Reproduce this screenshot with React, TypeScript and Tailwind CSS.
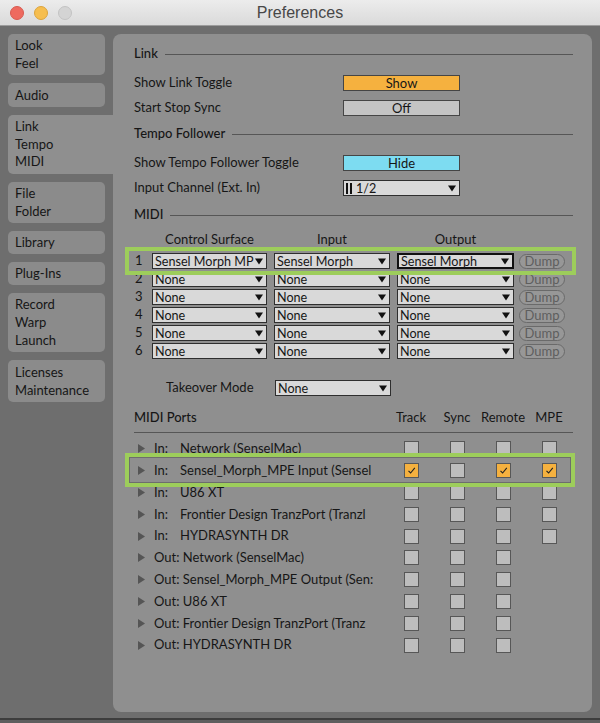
import React from "react";

function Arrow() {
  return (
    <svg width="8" height="7" viewBox="0 0 8 7" className="shrink-0">
      <path d="M0 0.5 H8 L4 6.5 Z" fill="#111" />
    </svg>
  );
}

function Dropdown({ cls, label, bars }: { cls: string; label: string; bars?: boolean }) {
  return (
    <div className={`flex h-[16px] items-center justify-between bg-[#d9d9d9] pl-[2px] pr-[3px] ${cls}`}>
      <div className="flex min-w-0 flex-1 items-center whitespace-nowrap text-[12.6px] leading-[15px]">
        {bars && (
          <span className="mr-[4px] flex shrink-0 gap-[2px]">
            <span className="h-[11px] w-[2px] bg-[#111]" />
            <span className="h-[11px] w-[2px] bg-[#111]" />
          </span>
        )}
        <span>{label}</span>
      </div>
      <Arrow />
    </div>
  );
}

function Header({ label, cls }: { label: string; cls: string }) {
  return (
    <div className={`flex items-center ${cls}`}>
      <span className="font-medium">{label}</span>
      <div className="ml-[7px] h-px flex-1 bg-[#565656]" />
    </div>
  );
}

function Check({ on }: { on?: boolean }) {
  return (
    <div
      className={`flex h-[15px] w-[15px] items-center justify-center border border-[#575757] ${
        on ? "bg-[#f5b13f]" : "bg-[#bdbdbd]"
      }`}
    >
      {on && (
        <svg width="11" height="11" viewBox="0 0 11 11">
          <path d="M2.5 5.8 L4.6 8 L8.8 2.8" fill="none" stroke="#222" strokeWidth="1.1" />
        </svg>
      )}
    </div>
  );
}

function Tri() {
  return (
    <div className="flex w-[20px] items-center pl-[4px]">
      <svg width="7" height="9" viewBox="0 0 7 9">
        <path d="M0 0 L7 4.5 L0 9 Z" fill="#555" />
      </svg>
    </div>
  );
}

const ports: { dir: "In" | "Out"; name: string; checks: boolean[] }[] = [
  { dir: "In", name: "Network (SenselMac)", checks: [false, false, false, false] },
  { dir: "In", name: "Sensel_Morph_MPE Input (Sensel", checks: [true, false, true, true] },
  { dir: "In", name: "U86 XT", checks: [false, false, false, false] },
  { dir: "In", name: "Frontier Design TranzPort (Tranzl", checks: [false, false, false, false] },
  { dir: "In", name: "HYDRASYNTH DR", checks: [false, false, false, false] },
  { dir: "Out", name: "Network (SenselMac)", checks: [false, false, false] },
  { dir: "Out", name: "Sensel_Morph_MPE Output (Sen:", checks: [false, false, false] },
  { dir: "Out", name: "U86 XT", checks: [false, false, false] },
  { dir: "Out", name: "Frontier Design TranzPort (Tranz", checks: [false, false, false] },
  { dir: "Out", name: "HYDRASYNTH DR", checks: [false, false, false] },
];

function Tab({ lines, cls }: { lines: string[]; cls: string }) {
  return (
    <div className={`w-[97px] rounded-[5px] bg-[#8b8b8b] pl-[7px] leading-[18px] ${cls}`}>
      {lines.map((l) => (
        <div key={l}>{l}</div>
      ))}
    </div>
  );
}

export default function App() {
  return (
    <div className="flex h-[723px] w-[600px] flex-col overflow-hidden bg-[#6e6e6e] font-[family-name:Lato,'Noto_Sans',sans-serif] text-[13px] text-[#161616]">
      {/* title bar */}
      <div className="grid h-[26px] shrink-0 grid-cols-[1fr_auto_1fr] items-center border-b border-[#9c9c9c] bg-gradient-to-b from-[#ececec] to-[#dadada]">
        <div className="flex items-center gap-[10px] pl-[10px]">
          <div className="h-[14px] w-[14px] rounded-full border border-[#d85a50] bg-[#ee6a5f]" />
          <div className="h-[14px] w-[14px] rounded-full border border-[#dca43c] bg-[#f6be4f]" />
          <div className="h-[14px] w-[14px] rounded-full border border-[#c3c3c3] bg-[#d4d4d4]" />
        </div>
        <div className="font-[family-name:'Liberation_Sans',sans-serif] text-[16px] text-[#474747]">Preferences</div>
        <div />
      </div>

      {/* body */}
      <div className="flex h-[692px] shrink-0 px-[8px] pt-[8px]">
        {/* sidebar */}
        <div className="flex w-[105px] shrink-0 flex-col gap-[8px]">
          <Tab lines={["Look", "Feel"]} cls="h-[41px] pt-[2px]" />
          <Tab lines={["Audio"]} cls="h-[24px] pt-[3px]" />
          <div className="h-[59px] w-[105px] rounded-l-[5px] bg-[#8f8f8f] pl-[7px] pt-[3px] leading-[17.5px]">
            <div>Link</div>
            <div>Tempo</div>
            <div>MIDI</div>
          </div>
          <Tab lines={["File", "Folder"]} cls="h-[41px] pt-[2px]" />
          <Tab lines={["Library"]} cls="h-[23px] pt-[2px]" />
          <Tab lines={["Plug-Ins"]} cls="h-[23px] pt-[2px]" />
          <Tab lines={["Record", "Warp", "Launch"]} cls="h-[59px] pt-[2px]" />
          <Tab lines={["Licenses", "Maintenance"]} cls="h-[42px] pt-[3px]" />
        </div>

        {/* panel */}
        <div className="relative flex h-[678px] w-[479px] shrink-0 flex-col rounded-[8px] bg-[#8f8f8f] pl-[21px] pr-[19px] pt-[6px]">
          <Header label="Link" cls="h-[28px]" />
          <div className="flex h-[30px] items-center">
            <span className="w-[209px]">Show Link Toggle</span>
            <div className="flex h-[16px] w-[117px] items-center justify-center border border-[#454545] bg-[#f5b13f] leading-[15px]">Show</div>
          </div>
          <div className="flex h-[20px] items-center">
            <span className="w-[209px]">Start Stop Sync</span>
            <div className="flex h-[16px] w-[117px] items-center justify-center border border-[#454545] bg-[#c4c4c4] leading-[15px]">Off</div>
          </div>
          <Header label="Tempo Follower" cls="h-[32px]" />
          <div className="flex h-[26px] items-center">
            <span className="w-[209px]">Show Tempo Follower Toggle</span>
            <div className="flex h-[16px] w-[117px] items-center justify-center border border-[#454545] bg-[#7ddcf1] leading-[15px]">Hide</div>
          </div>
          <div className="flex h-[24px] items-center">
            <span className="w-[209px]">Input Channel (Ext. In)</span>
            <Dropdown cls="w-[117px] border border-[#2e2e2e]" label="1/2" bars />
          </div>
          <Header label="MIDI" cls="h-[30px]" />

          {/* MIDI column headers */}
          <div className="flex h-[20px] items-center">
            <span className="w-[18px]" />
            <span className="w-[115px] text-center">Control Surface</span>
            <span className="ml-[7px] w-[116px] text-center">Input</span>
            <span className="ml-[7px] w-[117px] text-center">Output</span>
          </div>
          <div className="mt-[2px] flex flex-col">
            {[1, 2, 3, 4, 5, 6].map((n) => (
              <div key={n} className="flex h-[18px] items-center">
                <span className="w-[18px] pl-[1px]">{n}</span>
                <Dropdown cls="w-[115px] border border-[#2e2e2e]" label={n === 1 ? "Sensel Morph MP" : "None"} />
                <Dropdown cls="ml-[7px] w-[116px] border border-[#2e2e2e]" label={n === 1 ? "Sensel Morph" : "None"} />
                <Dropdown
                  cls={`ml-[7px] w-[117px] ${n === 1 ? "border-2 border-[#111]" : "border border-[#2e2e2e]"}`}
                  label={n === 1 ? "Sensel Morph" : "None"}
                />
                <div className="ml-[5px] flex h-[15px] w-[46px] items-center justify-center rounded-full border border-[#6a6a6a] bg-[#979797] leading-[14px] text-[#5e5e5e]">
                  Dump
                </div>
              </div>
            ))}
          </div>

          {/* takeover */}
          <div className="mt-[16px] flex h-[24px] items-center">
            <span className="w-[141px] pl-[32px]">Takeover Mode</span>
            <Dropdown cls="w-[116px] border border-[#2e2e2e]" label="None" />
          </div>

          {/* MIDI ports */}
          <div className="mt-[4px] flex h-[29px] items-center border-b border-[#565656]">
            <span className="w-[254px] font-medium">MIDI Ports</span>
            <span className="w-[46px] text-center">Track</span>
            <span className="w-[46px] text-center">Sync</span>
            <span className="w-[46px] text-center">Remote</span>
            <span className="w-[46px] text-center">MPE</span>
          </div>
          <div className="mt-[5px] flex flex-col">
            {ports.map((p, i) => (
              <div key={i} className="flex h-[21.8px] items-center">
                <Tri />
                <div className="w-[221px] whitespace-nowrap">
                  {p.dir === "In" ? (
                    <>
                      <span className="inline-block w-[26px]">In:</span>
                      {p.name}
                    </>
                  ) : (
                    <>Out: {p.name}</>
                  )}
                </div>
                <div className="w-[13px]" />
                {p.checks.map((c, j) => (
                  <div key={j} className="flex w-[46px] justify-center">
                    <Check on={c} />
                  </div>
                ))}
              </div>
            ))}
          </div>

          {/* annotation highlights */}
          <div className="pointer-events-none absolute left-[12px] top-[213px] h-[28px] w-[451px] border-[4px] border-[#9dcd5b]" />
          <div className="pointer-events-none absolute left-[12px] top-[419px] h-[34px] w-[450px] border-[4px] border-[#9dcd5b]">
            <div className="h-full w-full border border-[#6d6d6d]" />
          </div>
        </div>
      </div>

      <div className="h-[2px] shrink-0 bg-[#3d3d3d]" />
      <div className="h-[3px] shrink-0 bg-[#5e5e5e]" />
    </div>
  );
}
